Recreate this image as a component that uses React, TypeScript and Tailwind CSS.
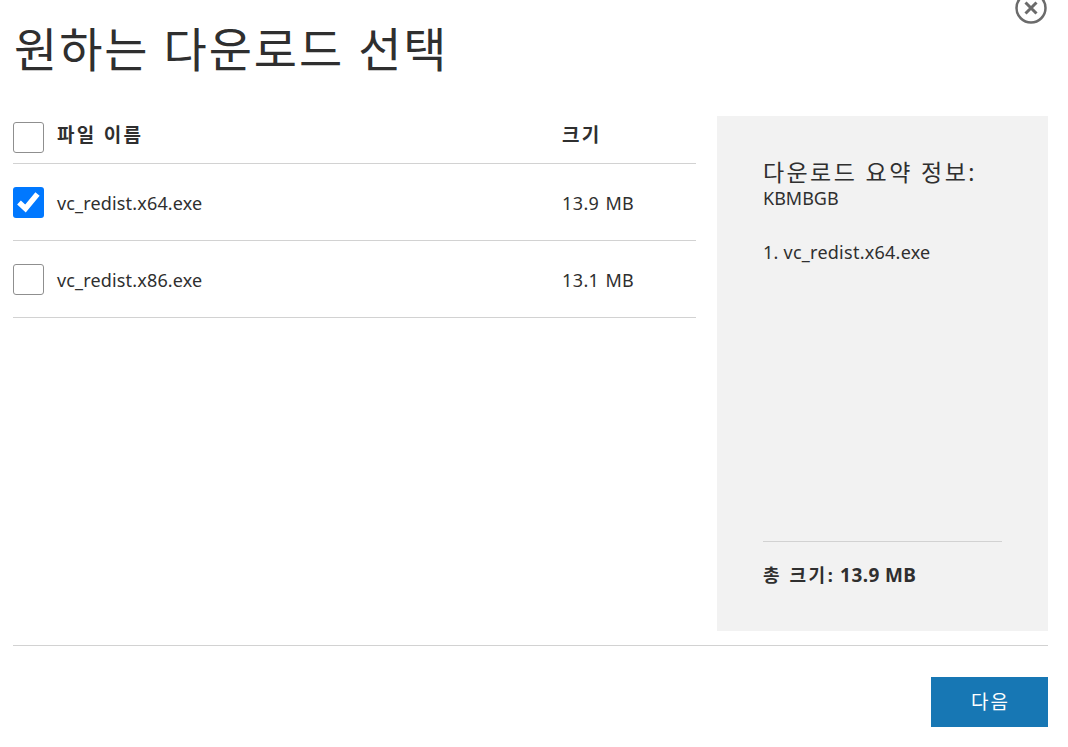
const files = [
  { name: "vc_redist.x64.exe", size: "13.9 MB", checked: true },
  { name: "vc_redist.x86.exe", size: "13.1 MB", checked: false },
];

const font = "font-['Noto_Sans','Noto_Sans_CJK_KR',sans-serif]";

const Checkbox = ({ checked }: { checked: boolean }) => {
  if (checked) {
    return (
      <div className="w-[31px] h-[31px] shrink-0 rounded-[3px] bg-[#0078ff] flex items-center justify-center">
        <svg width="31" height="31" viewBox="0 0 31 31" fill="none">
          <path d="M6 15.5 L12.5 21.5 L24.5 7" stroke="white" strokeWidth="5.5" />
        </svg>
      </div>
    );
  }
  return <div className="w-[31px] h-[31px] shrink-0 rounded-[3px] border border-[#8f8f8f] bg-white"></div>;
};

const App = () => {
  return (
    <div className={`relative w-[1068px] h-[747px] overflow-hidden bg-white text-[#2f2f2f] pl-[13px] pr-[20px] ${font}`}>
      <button className="absolute left-[1015px] top-[-8px] w-[32px] h-[32px]">
        <svg width="32" height="32" viewBox="0 0 32 32" fill="none" stroke="#6b6b6b">
          <circle cx="16" cy="16" r="14.5" strokeWidth="2.5" />
          <path d="M10.5 10.5 L21.5 21.5 M21.5 10.5 L10.5 21.5" strokeWidth="3" />
        </svg>
      </button>

      <h1 className="h-[116px] pt-[18px] pl-[1px] text-[47px] leading-[62px] font-normal tracking-[1.9px]">원하는 다운로드 선택</h1>

      <div className="flex h-[515px] gap-[21px]">
        <div className="w-[683px]">
          <div className="h-[48px] flex items-center border-b border-[#d2d2d2] pb-[4px] text-[19px] font-bold tracking-[2.3px]">
            <div className="w-[549px] flex items-center gap-[13px]">
              <Checkbox checked={false} />
              <span className="mb-[5px]">파일 이름</span>
            </div>
            <span className="mb-[5px]">크기</span>
          </div>
          {files.map((f) => (
            <div key={f.name} className="h-[77px] flex items-center border-b border-[#d2d2d2] text-[18px] tracking-[0.16px]">
              <div className="w-[549px] flex items-center gap-[13px]">
                <Checkbox checked={f.checked} />
                <span className="mt-[2px]">{f.name}</span>
              </div>
              <span className="mt-[2px] tracking-[0.4px] [word-spacing:1px]">{f.size}</span>
            </div>
          ))}
        </div>

        <div className="w-[331px] bg-[#f2f2f2] px-[46px] flex flex-col">
          <div className="pt-[41px] text-[23px] leading-[30px] tracking-[2.4px]">다운로드 요약 정보:</div>
          <div className="text-[18px] leading-[22px]">KBMBGB</div>
          <div className="mt-[31px] text-[18px] leading-[24px] tracking-[0.25px]">1. vc_redist.x64.exe</div>
          <div className="mt-auto mb-[43px] border-t border-[#d2d2d2] pt-[20px] text-[18px] leading-[26px] font-bold">
            <span className="tracking-[2.6px]">총 크기:</span> <span className="text-[19px] tracking-[0.4px]">13.9 MB</span>
          </div>
        </div>
      </div>

      <div className="mt-[14px] border-t border-[#d2d2d2] flex justify-end pt-[31px]">
        <button className="w-[117px] h-[50px] bg-[#1777b4] text-white text-[19px] tracking-[2px] pl-[2px]">다음</button>
      </div>
    </div>
  );
};

export default App;
